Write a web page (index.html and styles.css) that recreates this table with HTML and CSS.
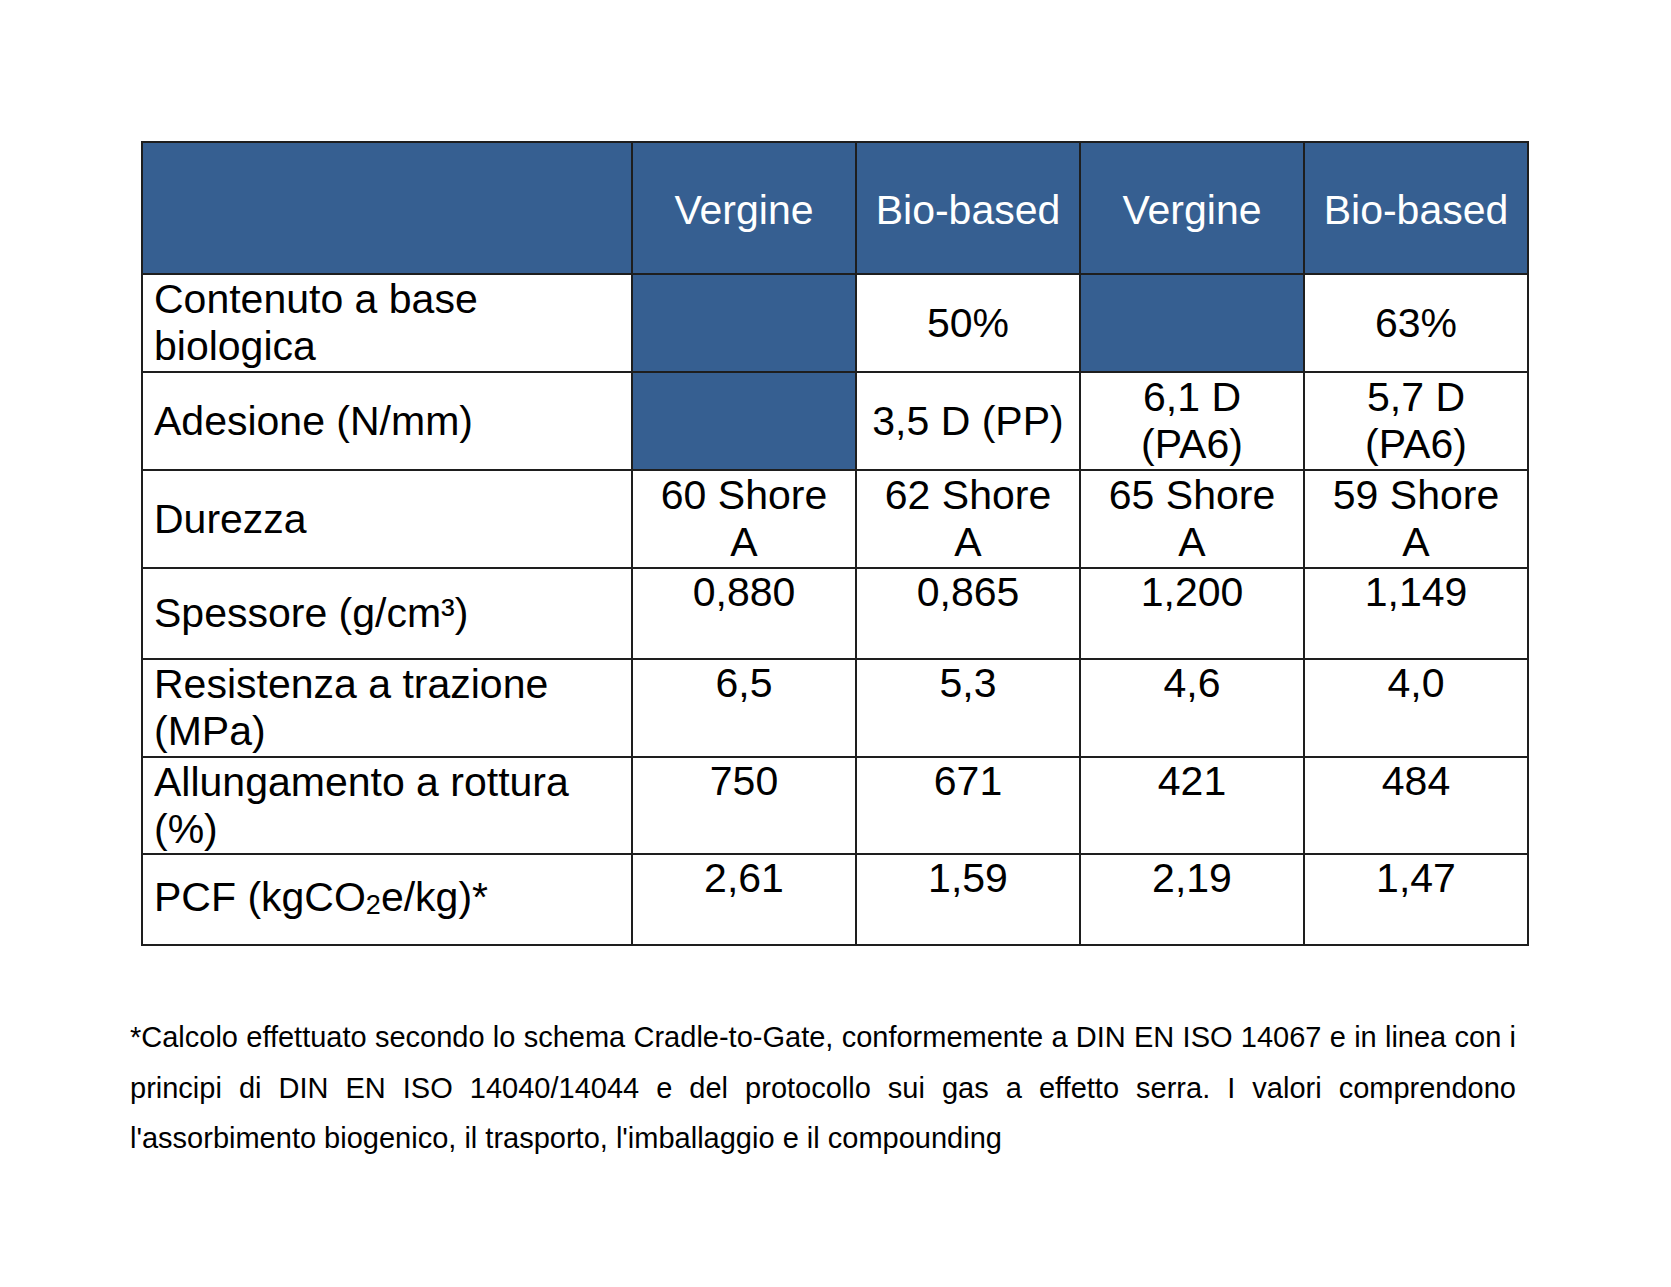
FILE: index.html
```html
<!DOCTYPE html>
<html lang="it">
<head>
<meta charset="utf-8">
<title>Tabella</title>
<link rel="stylesheet" href="styles.css">
</head>
<body>
<div class="page">
  <table class="data">
    <colgroup>
      <col class="c-label">
      <col class="c-val">
      <col class="c-val">
      <col class="c-val">
      <col class="c-val">
    </colgroup>
    <tr class="r-head">
      <th class="blue"></th>
      <th class="blue">Vergine</th>
      <th class="blue">Bio-based</th>
      <th class="blue">Vergine</th>
      <th class="blue">Bio-based</th>
    </tr>
    <tr class="r-98">
      <td class="label">Contenuto a base biologica</td>
      <td class="blue"></td>
      <td>50%</td>
      <td class="blue"></td>
      <td>63%</td>
    </tr>
    <tr class="r-98">
      <td class="label">Adesione (N/mm)</td>
      <td class="blue"></td>
      <td>3,5 D (PP)</td>
      <td>6,1 D (PA6)</td>
      <td>5,7 D (PA6)</td>
    </tr>
    <tr class="r-98">
      <td class="label">Durezza</td>
      <td>60 Shore A</td>
      <td>62 Shore A</td>
      <td>65 Shore A</td>
      <td>59 Shore A</td>
    </tr>
    <tr class="r-91">
      <td class="label">Spessore (g/cm³)</td>
      <td class="top">0,880</td>
      <td class="top">0,865</td>
      <td class="top">1,200</td>
      <td class="top">1,149</td>
    </tr>
    <tr class="r-98">
      <td class="label">Resistenza a trazione (MPa)</td>
      <td class="top">6,5</td>
      <td class="top">5,3</td>
      <td class="top">4,6</td>
      <td class="top">4,0</td>
    </tr>
    <tr class="r-97">
      <td class="label">Allungamento a rottura (%)</td>
      <td class="top">750</td>
      <td class="top">671</td>
      <td class="top">421</td>
      <td class="top">484</td>
    </tr>
    <tr class="r-91">
      <td class="label">PCF (kgCO<span class="sub">2</span>e/kg)*</td>
      <td class="top">2,61</td>
      <td class="top">1,59</td>
      <td class="top">2,19</td>
      <td class="top">1,47</td>
    </tr>
  </table>
  <p class="note">*Calcolo effettuato secondo lo schema Cradle-to-Gate, conformemente a DIN EN ISO 14067 e in linea con i principi di DIN EN ISO 14040/14044 e del protocollo sui gas a effetto serra. I valori comprendono l'assorbimento biogenico, il trasporto, l'imballaggio e il compounding</p>
</div>
</body>
</html>
```
FILE: styles.css
```css
html, body {
  margin: 0;
  padding: 0;
  background: #ffffff;
}

body {
  font-family: "Liberation Sans", Arial, sans-serif;
  color: #000000;
}

.page {
  padding: 141px 0 0 130px;
}

.data {
  margin-left: 11px;
  width: 1385px;
  table-layout: fixed;
  border-collapse: collapse;
  border: 2px solid #1e1e1e;
  font-size: 41px;
}

.c-label { width: 490px; }
.c-val { width: 224px; }

.data th,
.data td {
  border: 2px solid #1e1e1e;
  padding: 0 12px;
  text-align: center;
  vertical-align: middle;
  font-weight: normal;
  line-height: 47px;
}

.data td.label {
  text-align: left;
  padding-left: 11px;
}

.data td.top {
  vertical-align: top;
}

.blue {
  background: #365f91;
  color: #ffffff;
}

.r-head { height: 132px; }
.r-head th { padding-top: 4px; }
.r-98 { height: 98px; }
.r-97 { height: 97px; }
.r-91 { height: 91px; }

.sub {
  font-size: 27px;
  position: relative;
  top: 3px;
}

.note {
  width: 1386px;
  margin: 66px 0 0 0;
  font-size: 29px;
  line-height: 50.5px;
  text-align: justify;
}
```
